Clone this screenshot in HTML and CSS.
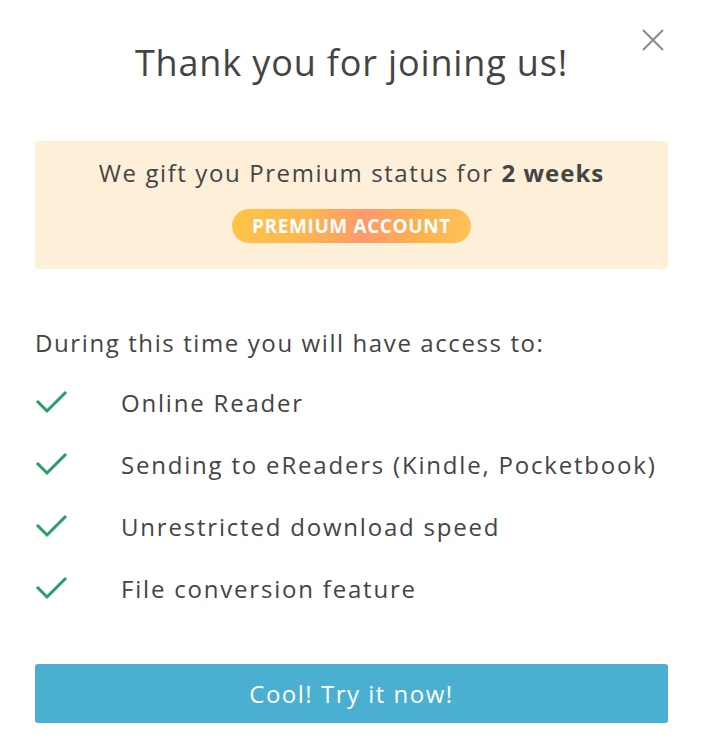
FILE: index.html
```html
<!DOCTYPE html>
<html lang="en">
<head>
    <meta charset="UTF-8">
    <meta name="viewport" content="width=device-width, initial-scale=1.0">
    <title>Thank you for joining us!</title>
    <link rel="stylesheet" href="styles.css">
</head>
<body>
    <div class="modal">
        <button class="close" aria-label="Close">
            <svg width="24" height="24" viewBox="0 0 24 24">
                <path d="M2 2 L22 22 M22 2 L2 22" stroke="#8a8a8a" stroke-width="2" fill="none"/>
            </svg>
        </button>
        <h1 class="title">Thank you for joining us!</h1>

        <div class="gift">
            <p class="gift-text">We gift you Premium status for <b>2 weeks</b></p>
            <span class="badge">PREMIUM ACCOUNT</span>
        </div>

        <p class="intro">During this time you will have access to:</p>
        <ul class="features">
            <li><svg class="check" width="34" height="24" viewBox="0 0 34 24"><polyline points="2,11 12,21 31,2" fill="none" stroke="#23a062" stroke-width="3"/></svg>Online Reader</li>
            <li><svg class="check" width="34" height="24" viewBox="0 0 34 24"><polyline points="2,11 12,21 31,2" fill="none" stroke="#23a062" stroke-width="3"/></svg>Sending to eReaders (Kindle, Pocketbook)</li>
            <li><svg class="check" width="34" height="24" viewBox="0 0 34 24"><polyline points="2,11 12,21 31,2" fill="none" stroke="#23a062" stroke-width="3"/></svg>Unrestricted download speed</li>
            <li><svg class="check" width="34" height="24" viewBox="0 0 34 24"><polyline points="2,11 12,21 31,2" fill="none" stroke="#23a062" stroke-width="3"/></svg>File conversion feature</li>
        </ul>

        <button class="cta">Cool! Try it now!</button>
    </div>
</body>
</html>
```

FILE: styles.css
```css
body {
    margin: 0;
    background-color: #fff;
    font-family: "Open Sans", Arial, sans-serif;
    color: #444;
}
.modal {
    position: relative;
    padding: 36px 37px 27px 35px;
}
.close {
    position: absolute;
    top: 28px;
    right: 40px;
    padding: 0;
    border: none;
    background: none;
    cursor: pointer;
}
.title {
    margin: 0;
    text-align: center;
    font-size: 36px;
    font-weight: 400;
    letter-spacing: 0.85px;
    line-height: 54px;
    color: #444;
}
.gift {
    margin-top: 51px;
    height: 128px;
    box-sizing: border-box;
    padding-top: 16px;
    background-color: #fdefd8;
    border-radius: 4px;
    text-align: center;
}
.gift-text {
    margin: 0;
    font-size: 24px;
    letter-spacing: 1.6px;
    line-height: 32px;
}
.gift-text b {
    font-weight: 700;
    letter-spacing: 1px;
}
.badge {
    display: inline-block;
    margin-top: 20px;
    padding: 0 20px;
    height: 34px;
    line-height: 34px;
    border-radius: 17px;
    background: linear-gradient(100deg, #fdc447 0%, #fdb84e 30%, #fd9a6a 55%, #fdb34c 80%, #fdc35a 100%);
    color: #fff;
    font-size: 19px;
    font-weight: 700;
    letter-spacing: 0.6px;
}
.intro {
    margin: 58px 0 0;
    font-size: 24px;
    letter-spacing: 1.6px;
    line-height: 32px;
}
.features {
    list-style: none;
    margin: 12px 0 0;
    padding: 0;
}
.features li {
    display: flex;
    align-items: center;
    height: 62px;
    font-size: 24px;
    letter-spacing: 1.8px;
}
.check {
    flex: none;
    margin-right: 52px;
}
.cta {
    display: block;
    width: 100%;
    height: 59px;
    margin-top: 45px;
    border: none;
    border-radius: 3px;
    background-color: #4aafd0;
    color: #fff;
    font-family: inherit;
    font-size: 24px;
    letter-spacing: 1.5px;
    cursor: pointer;
}
```
